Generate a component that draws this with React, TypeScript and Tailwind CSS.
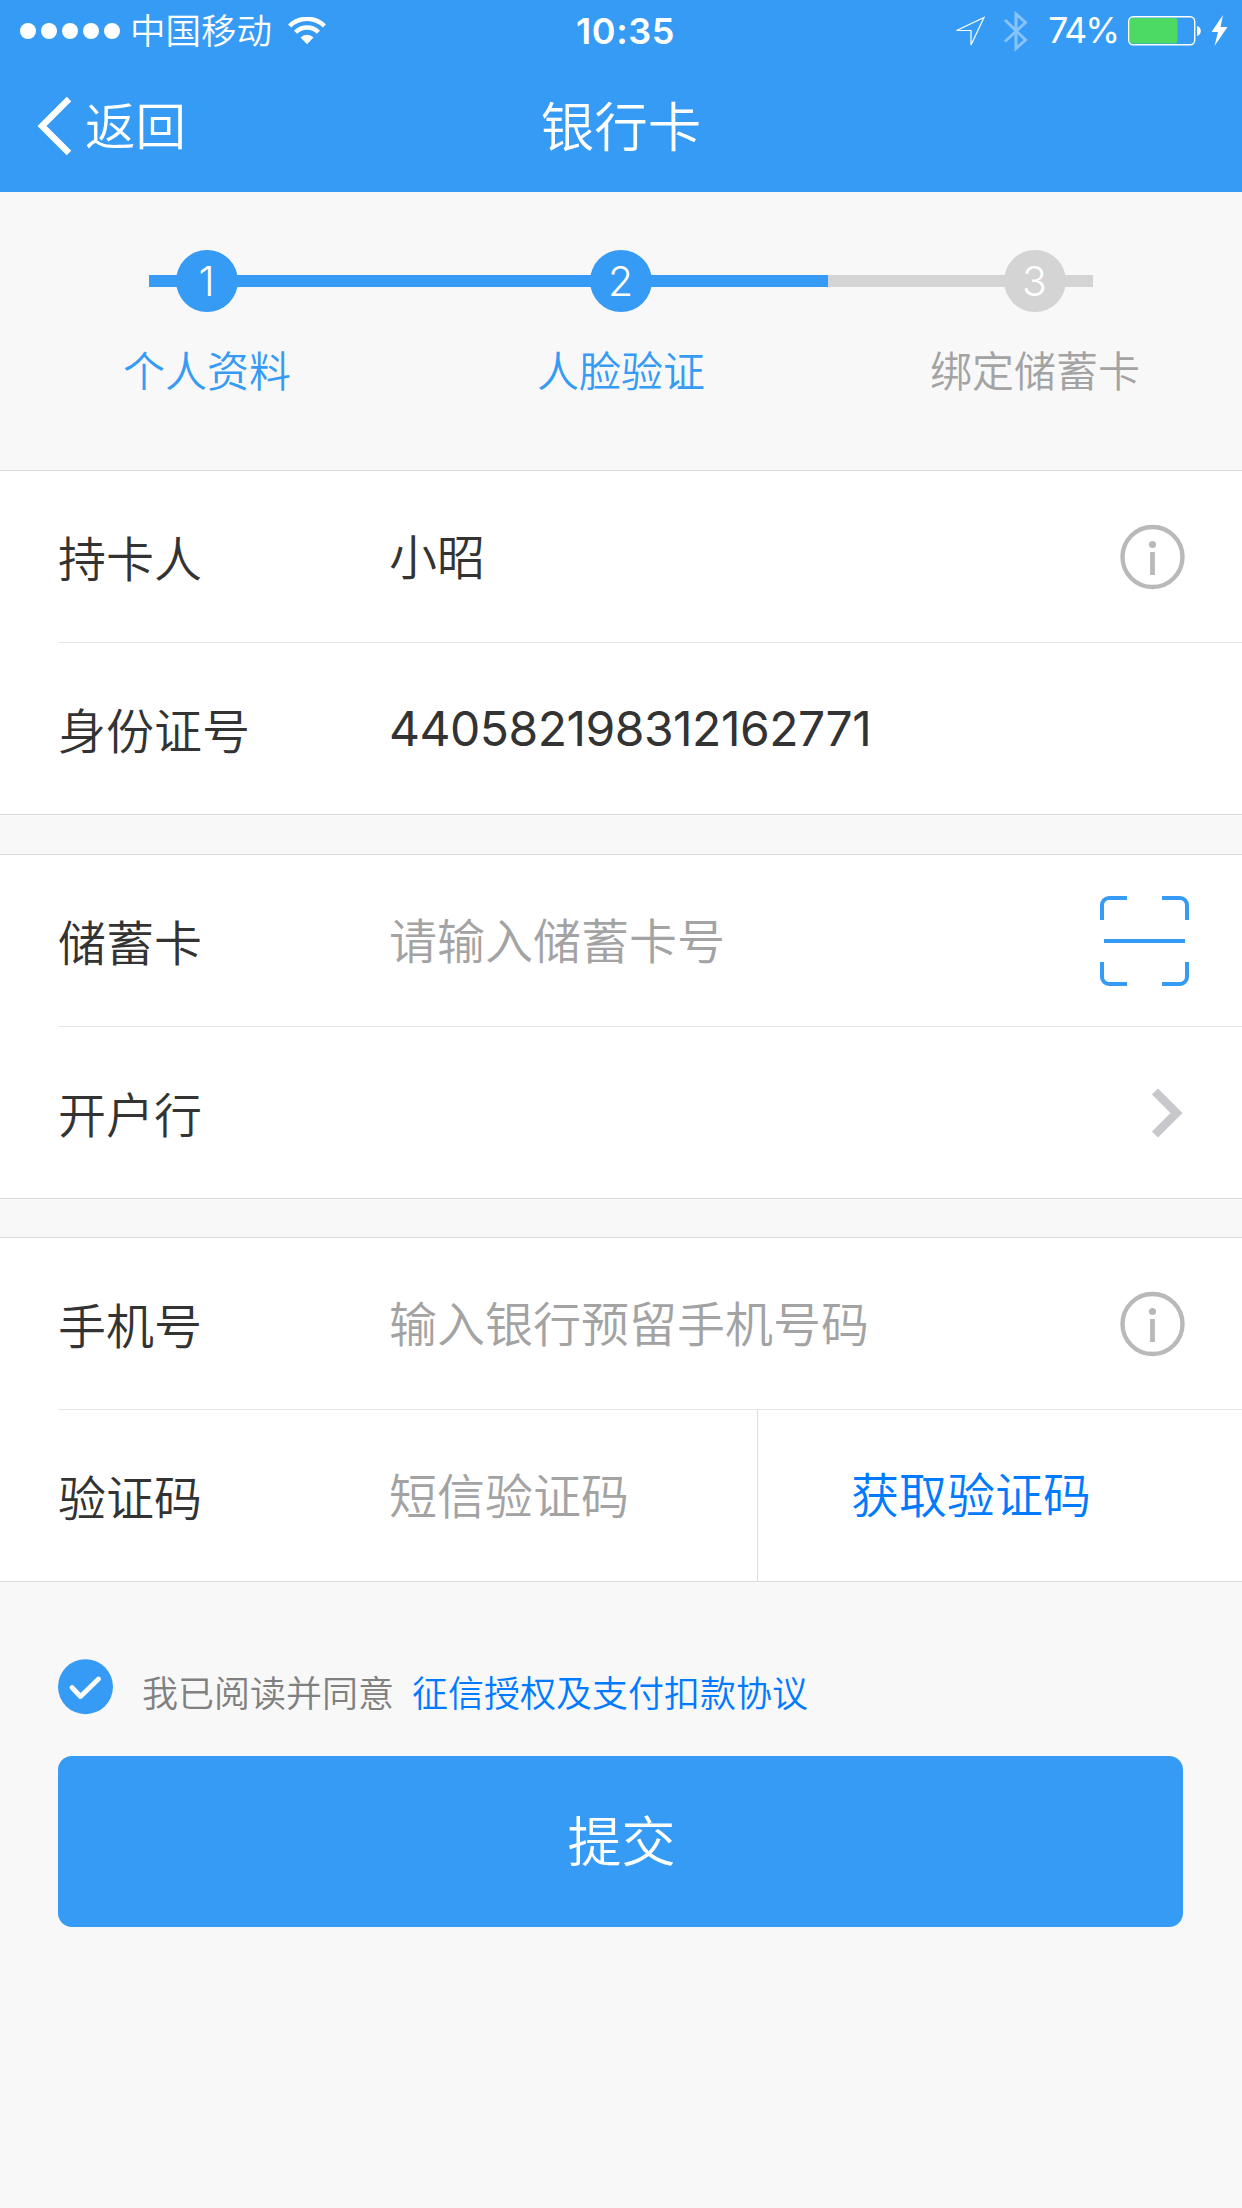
import type { ReactNode } from 'react'

interface Step {
  no: number
  label: string
  done: boolean
}

const STEPS: Step[] = [
  { no: 1, label: '个人资料', done: true },
  { no: 2, label: '人脸验证', done: true },
  { no: 3, label: '绑定储蓄卡', done: false },
]

function InfoIcon() {
  return (
    <svg width="66" height="66" viewBox="0 0 66 66" className="shrink-0">
      <circle cx="32.5" cy="33" r="30" fill="none" stroke="#b9b9b9" strokeWidth="4.4" />
      <circle cx="32.5" cy="20.5" r="3.6" fill="#b9b9b9" />
      <rect x="30.1" y="28" width="4.8" height="23" fill="#b9b9b9" />
    </svg>
  )
}

function ScanIcon() {
  return (
    <svg width="89" height="90" viewBox="0 0 89 90" fill="none" stroke="#369bf4" strokeWidth="4" className="shrink-0">
      <path d="M2 24V9a7 7 0 0 1 7-7h18M62 2h18a7 7 0 0 1 7 7v15M87 66v15a7 7 0 0 1-7 7H62M27 88H9a7 7 0 0 1-7-7V66M4 45h81" />
    </svg>
  )
}

function StatusBar() {
  return (
    <div className="flex h-[60px] items-center justify-between pt-0.5 pr-[13px] pl-5">
      <div className="flex w-[480px] items-center">
        <div className="flex gap-[5px]">
          {[0, 1, 2, 3, 4].map((i) => (
            <span key={i} className="size-4 rounded-full bg-white" />
          ))}
        </div>
        <span className="ml-2.5 pt-0.5 text-[35.5px] leading-[60px]">中国移动</span>
        <svg width="38" height="28" viewBox="0 0 38 28" className="ml-4">
          <path d="M1.6 9a24.6 24.6 0 0 1 34.8 0M7.6 15.2a16.1 16.1 0 0 1 22.800 0" fill="none" stroke="white" strokeWidth="4.4" />
          <path d="M12.5 20.5a9.2 9.2 0 0 1 13 0L19 27.2z" fill="white" />
        </svg>
      </div>
      <span className="pl-0.5 text-[36px] leading-[60px] font-semibold tracking-[0.6px]">10:35</span>
      <div className="flex w-[480px] items-center justify-end">
        <svg width="32" height="32" viewBox="0 0 32 32" fill="none" stroke="white" strokeWidth="1.2" className="mr-[17px]">
          <path d="M2.5 15.5 30 2.5 17 30V15.5z" />
        </svg>
        <svg width="26" height="42" viewBox="0 0 26 42" fill="none" stroke="white" strokeWidth="3" className="mr-[19px] opacity-40">
          <path d="M2 10l20.5 20L13 38.5V4l9.5 8.5L2 31.5" />
        </svg>
        <span className="text-[35.5px] leading-[60px] font-normal tracking-[-2px]">74%</span>
        <svg width="104" height="32" viewBox="0 0 104 32" className="ml-[7px]">
          <rect x="3.7" y="1.7" width="66" height="28" rx="4.5" fill="none" stroke="white" strokeWidth="1.4" />
          <rect x="5" y="3" width="47.5" height="25.5" rx="2.5" fill="#4cd964" />
          <path d="M72 11c5 1 5 9 0 10z" fill="white" />
          <path d="M98 0 86.5 17H93l-3.5 14L102.5 12H95.5z" fill="white" />
        </svg>
      </div>
    </div>
  )
}

function Header() {
  return (
    <header className="h-48 bg-[#369bf4] text-white">
      <StatusBar />
      <div className="grid h-[132px] grid-cols-3 items-center">
        <button className="flex items-center pl-[37px] text-[50.5px] leading-[72px]">
          <svg width="36" height="60" viewBox="0 0 36 60" fill="none" stroke="white" strokeWidth="6.4" className="mr-3">
            <path d="M32 3 5 30l27 27" />
          </svg>
          <span className="pt-px">返回</span>
        </button>
        <h1 className="pt-[3px] text-center text-[53.5px] leading-[80px]">银行卡</h1>
      </div>
    </header>
  )
}

function Steps() {
  return (
    <div className="relative h-[278px]">
      <div className="absolute top-[83px] left-[149px] flex h-3 w-[944px] bg-[#d4d4d4]">
        <div className="w-[679px] bg-[#369bf4]" />
      </div>
      <div className="relative grid grid-cols-3 pt-[58px]">
        {STEPS.map((s) => (
          <div key={s.no} className="flex flex-col items-center text-[42px]">
            <span
              className={`flex size-[62px] items-center justify-center rounded-full pr-px text-[41px] text-white ${s.done ? 'bg-[#369bf4]' : 'bg-[#d4d4d4]'}`}
            >
              {s.no}
            </span>
            <span className={`mt-7 leading-[64px] whitespace-nowrap ${s.done ? 'text-[#369bf4]' : 'text-[#a3a3a3]'}`}>{s.label}</span>
          </div>
        ))}
      </div>
    </div>
  )
}

function Group({ children }: { children: ReactNode }) {
  return <section className="border-y border-[#dcdcdc] bg-white last:-mt-px">{children}</section>
}

function Row({ label, children, last = false }: { label: string; children?: ReactNode; last?: boolean }) {
  return (
    <div className={`ml-[59px] flex items-center ${last ? 'h-[171px]' : 'h-[172px] border-b border-[#e4e4e4]'}`}>
      <span className="-ml-px w-[331px] shrink-0 pt-1.5 text-[#333]">{label}</span>
      {children}
    </div>
  )
}

export default function App() {
  return (
    <div className="min-h-[2208px] w-[1242px] bg-[#f8f8f8] font-['Inter','Noto_Sans_CJK_SC',sans-serif] text-[48px] leading-[72px] font-[350]">
      <Header />
      <Steps />

      <div className="flex flex-col gap-[39px]">
        {/* 身份信息 */}
        <Group>
          <Row label="持卡人">
            <span className="flex-1 pt-0.5 text-[#333]">小昭</span>
            <div className="mr-14">
              <InfoIcon />
            </div>
          </Row>
          <Row label="身份证号" last>
            <span className="pt-px font-normal tracking-[-0.5px] text-[#333]">440582198312162771</span>
          </Row>
        </Group>

        {/* 银行卡信息 */}
        <Group>
          <Row label="储蓄卡">
            <span className="flex-1 pt-0.5 text-[#a3a3a3]">请输入储蓄卡号</span>
            <div className="mr-[53px]">
              <ScanIcon />
            </div>
          </Row>
          <Row label="开户行" last>
            <svg width="32" height="50" viewBox="0 0 32 50" fill="none" stroke="#c7c7cc" strokeWidth="8.5" className="mr-[59px] ml-auto">
              <path d="M4 3.5 25.5 25 4 46.5" />
            </svg>
          </Row>
        </Group>

        {/* 手机验证 */}
        <Group>
          <Row label="手机号">
            <span className="flex-1 pt-0.5 text-[#a3a3a3]">输入银行预留手机号码</span>
            <div className="mr-14">
              <InfoIcon />
            </div>
          </Row>
          <Row label="验证码" last>
            <span className="flex-1 pt-0.5 text-[#a3a3a3]">短信验证码</span>
            <button className="h-full w-[485px] border-l border-[#dcdcdc] pr-[58px] text-[#007aff]">获取验证码</button>
          </Row>
        </Group>
      </div>

      <div className="mt-[77px] flex items-start pl-[58px] text-[36px] leading-[56px]">
        <svg width="55" height="56" viewBox="0 0 55 56" className="shrink-0">
          <circle cx="27.5" cy="27.7" r="27.5" fill="#369bf4" />
          <path d="M14 28.5l8.5 9L40.5 20" fill="none" stroke="white" strokeWidth="4.8" strokeLinecap="round" strokeLinejoin="round" />
        </svg>
        <span className="mt-[7px] ml-[29px] text-[#808080]">我已阅读并同意</span>
        <a className="mt-[7px] ml-[18px] text-[#007aff]">征信授权及支付扣款协议</a>
      </div>
      <button className="mt-[34px] ml-[58px] block h-[171px] w-[1125px] rounded-[14px] bg-[#369bf4] pt-0.5 pl-0.5 text-[54px] text-white">提交</button>
    </div>
  )
}
